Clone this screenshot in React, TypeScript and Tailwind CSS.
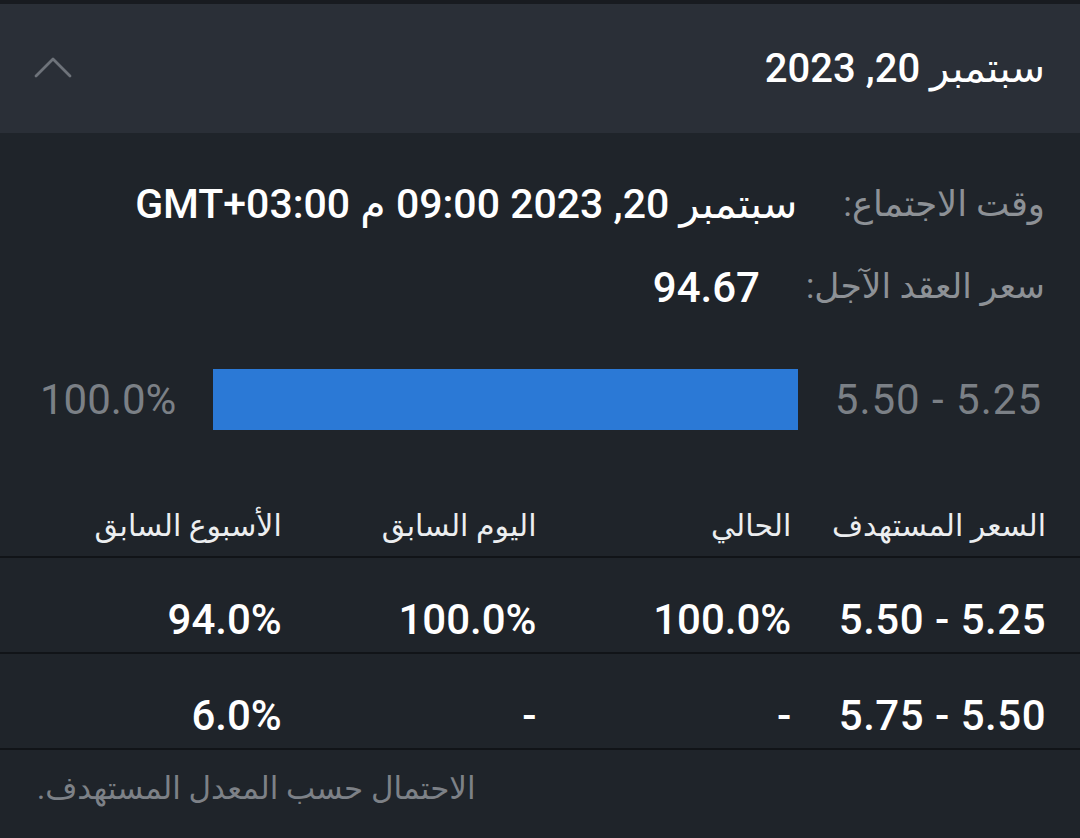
// --- Data --------------------------------------------------------------------

const rows = [
  { range: '5.50 - 5.25', current: '100.0%', prevDay: '100.0%', prevWeek: '94.0%' },
  { range: '5.75 - 5.50', current: '-', prevDay: '-', prevWeek: '6.0%' },
]

const font = { fontFamily: 'Roboto, "DejaVu Sans", sans-serif' }

// --- Component ---------------------------------------------------------------

export default function App() {
  return (
    <div className="flex h-[838px] w-[1080px] flex-col overflow-hidden bg-[#1f242a]" style={font}>
      <div className="h-[4px] bg-[#181b20]" />

      {/* Header */}
      <div className="flex h-[129px] items-center justify-between bg-[#2a2f37] pl-[33px] pr-[35px]">
        <svg width="40" height="24" viewBox="0 0 40 24" fill="none" className="mt-[-2px]">
          <path d="M3 20 L20 3 L37 20" stroke="#6e737a" strokeWidth="2.8" strokeLinecap="round" strokeLinejoin="round" />
        </svg>
        <div dir="rtl" className="text-[40px] font-medium text-white">
          سبتمبر 20, 2023
        </div>
      </div>

      {/* Meeting info */}
      <div dir="rtl" className="flex flex-col pr-[35px] pt-[31px]">
        <div className="flex h-[82px] items-center gap-[46px]">
          <span className="text-[35.5px] text-[#8d9196]">وقت الاجتماع:</span>
          <span className="text-[41px] font-medium text-white">سبتمبر 20, 2023 09:00 م GMT+03:00</span>
        </div>
        <div className="flex h-[82px] items-center gap-[46px]">
          <span className="text-[34.5px] text-[#8d9196]">سعر العقد الآجل:</span>
          <span className="text-[42px] font-medium text-white">94.67</span>
        </div>
      </div>

      {/* Probability bar */}
      <div className="mt-[41px] flex h-[61px] items-center gap-[37px] pl-[40px] pr-[38px]">
        <span className="text-[42px] text-[#7b8086]">100.0%</span>
        <div className="h-[61px] flex-1 bg-[#2b79d6]" />
        <span dir="ltr" className="text-[42px] tracking-[1px] text-[#7b8086]">5.50 - 5.25</span>
      </div>

      {/* Table */}
      <div className="mt-[64px] flex flex-col">
        <div dir="rtl" className="grid h-[62px] grid-cols-4 items-center pl-[27px] pr-[34px] text-[30px] text-[#eceef0]">
          <span>السعر المستهدف</span>
          <span>الحالي</span>
          <span>اليوم السابق</span>
          <span>الأسبوع السابق</span>
        </div>
        {rows.map((row) => (
          <div
            key={row.range}
            dir="rtl"
            className="grid h-[96px] grid-cols-4 items-center border-t-2 border-[#111418] pl-[27px] pr-[34px] pt-[28px] text-[42px] font-medium text-white"
          >
            <span dir="ltr" className="text-right tracking-[0.5px]">{row.range}</span>
            <span dir="ltr" className="text-right">{row.current}</span>
            <span dir="ltr" className="text-right">{row.prevDay}</span>
            <span dir="ltr" className="text-right">{row.prevWeek}</span>
          </div>
        ))}
        <div className="flex h-[80px] items-center border-t-2 border-[#111418] pl-[37px]">
          <span dir="rtl" className="text-[31px] text-[#7d8187]">
            الاحتمال حسب المعدل المستهدف.
          </span>
        </div>
      </div>
    </div>
  )
}
